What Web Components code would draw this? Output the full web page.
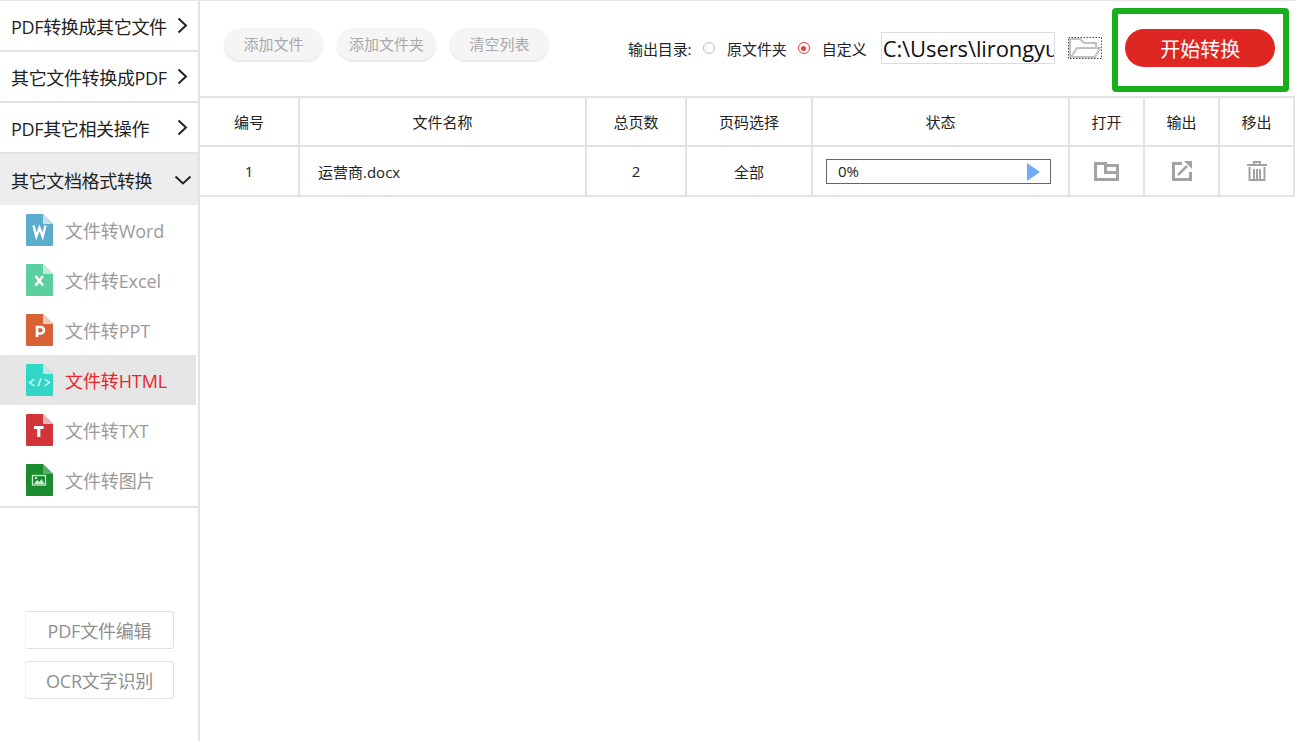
<!DOCTYPE html>
<html lang="zh"><head><meta charset="utf-8"><title>文件转HTML</title>
<style>
html,body{margin:0;padding:0;height:100%;background:#fff;overflow:hidden}
body{font-family:"Open Sans","Noto Sans CJK SC",sans-serif;color:#222}
</style></head><body>
<app-shell>
  <side-bar slot="side">
    <menu-row>PDF转换成其它文件</menu-row>
    <menu-row>其它文件转换成PDF</menu-row>
    <menu-row>PDF其它相关操作</menu-row>
    <menu-row open>其它文档格式转换</menu-row>
    <sub-list>
      <file-item color="#5baccd" fold="#c3dfeb" glyph="W">文件转Word</file-item>
      <file-item color="#5bcf9f" fold="#bdeeda" glyph="X">文件转Excel</file-item>
      <file-item color="#d86135" fold="#ecc9b8" glyph="P">文件转PPT</file-item>
      <file-item color="#31d6c6" fold="#bce9e4" glyph="code" active>文件转HTML</file-item>
      <file-item color="#d23439" fold="#e8b9b9" glyph="T">文件转TXT</file-item>
      <file-item color="#1a8c2e" fold="#58ad68" glyph="img">文件转图片</file-item>
    </sub-list>
    <side-btn slot="foot">PDF文件编辑</side-btn>
    <side-btn slot="foot">OCR文字识别</side-btn>
  </side-bar>
  <top-bar slot="top"></top-bar>
  <file-table slot="main"></file-table>
</app-shell>
<script>
const def=(name,css,html,init)=>customElements.define(name,class extends HTMLElement{
  constructor(){super();const r=this.attachShadow({mode:'open'});r.innerHTML=`<style>${css}</style>${typeof html==='function'?html(this):html}`;}
  connectedCallback(){init&&init(this)}
});
def('app-shell',`
:host{display:grid;grid-template-columns:200px 1fr;grid-template-rows:95px 1fr;width:1296px;height:741px;box-sizing:border-box;border-top:1px solid #e6e6e6}
.s{grid-row:1/3;display:flex;min-height:0}
.t{display:block;min-width:0}.m{display:block;min-width:0}
`,`<div class="s"><slot name="side"></slot></div><div class="t"><slot name="top"></slot></div><div class="m"><slot name="main"></slot></div>`);
def('side-bar',`
:host{display:flex;flex-direction:column;width:200px;box-sizing:border-box;border-right:2px solid #e3e3e3;height:740px;margin-right:0}
.foot{display:flex;flex-direction:column;gap:12px;padding:103px 0 0 25px}
`,`<slot></slot><div class="foot"><slot name="foot"></slot></div>`);
def('menu-row',`
:host{display:flex;align-items:center;justify-content:space-between;height:49px;border-bottom:2px solid #e3e3e3;padding:0 10px 0 11px;font-size:18px;color:#1f1f1f;white-space:nowrap;letter-spacing:-.35px}
:host([open]){background:#ededed;border-bottom:0;height:51px;padding-right:6px}
svg{flex:none;display:block}
`,el=>`<span><slot></slot></span>${el.hasAttribute('open')
?'<svg width="18" height="10" viewBox="0 0 18 10"><path d="M1.500 1.500L9 8.500L16.500 1.500" fill="none" stroke="#222" stroke-width="2"/></svg>'
:'<svg width="11" height="17" viewBox="0 0 11 17"><path d="M1.500 1.500L9 8.500L1.500 15.500" fill="none" stroke="#222" stroke-width="2"/></svg>'}`);
def('sub-list',`:host{display:block;border-bottom:2px solid #e3e3e3;height:301px}`,`<slot></slot>`);
def('file-item',`
:host{display:flex;align-items:center;height:50px;width:196px;padding-left:26px;box-sizing:border-box;font-size:18px;color:#9a9a9a;white-space:nowrap;letter-spacing:-.1px}
:host([active]){background:#e6e6e6;color:#e8262a}
svg{flex:none;display:block;margin-right:12px}
`,el=>{
 const c=el.getAttribute('color'),f=el.getAttribute('fold'),g=el.getAttribute('glyph');
 const path={
  W:'<path d="M7.500 11.500l2.800 11 3.200-8.500 3.200 8.500 2.800-11" fill="none" stroke="#fff" stroke-width="2.400"/>',
  X:'<path d="M9.500 12l7.500 9.500M17 12l-7.500 9.500" fill="none" stroke="#fff" stroke-width="2.400"/>',
  P:'<path d="M11 23V13h3.700a3 3 0 0 1 0 6.500h-3.700" fill="none" stroke="#fff" stroke-width="2.600"/>',
  T:'<path d="M8 13.500h9.500M12.750 13.500V23" fill="none" stroke="#fff" stroke-width="3.200"/>',
  code:'<path d="M8.500 15l-5 3.500 5 3.500M18.500 15l5 3.500-5 3.500M15 14.500l-3 8" fill="none" stroke="#d7f7f3" stroke-width="1.500"/>',
  img:'<rect x="6.500" y="11.500" width="13" height="9.500" fill="none" stroke="#cfe8d4" stroke-width="1.300"/><path d="M8 20l3-4 2.500 2 2-3 3 5z" fill="#cfe8d4"/><rect x="9" y="13" width="2" height="2" fill="#cfe8d4"/>'
 };
 return `<svg width="27" height="32" viewBox="0 0 27 32"><path d="M1 0H17L27 10V31a1 1 0 0 1-1 1H1a1 1 0 0 1-1-1V1a1 1 0 0 1 1-1z" fill="${c}"/><path d="M17 0L27 10H17z" fill="${f}"/>${path[g]}</svg><span><slot></slot></span>`;
});
def('side-btn',`
:host{display:flex;align-items:center;justify-content:center;width:149px;height:38px;box-sizing:border-box;border:1px solid #e0e0e0;border-left-color:#f0f0f0;border-radius:3px;font-size:18px;color:#8f8f8f;white-space:nowrap;letter-spacing:-.2px}
`,`<slot></slot>`);
def('pill-btn',`
:host{display:flex;align-items:center;justify-content:center;width:99px;height:32px;border-radius:16px;background:#f5f5f5;box-shadow:0 2px 2px #e8e8e8;font-size:15px;color:#a9a9a9;white-space:nowrap;box-sizing:border-box;padding-bottom:2px}
`,`<slot></slot>`);
def('radio-opt',`
:host{display:flex;align-items:center;gap:12px;font-size:15px;color:#222;white-space:nowrap;letter-spacing:-.05px}
i{display:block;width:12px;height:12px;border-radius:50%;box-sizing:border-box;border:1px solid #bdbdbd;background:#fff;position:relative;flex:none}
:host([on]) i{border-color:#e8403c}
:host([on]) i::after{content:"";position:absolute;left:2.500px;top:2.500px;width:5px;height:5px;border-radius:50%;background:#e8403c}
`,`<i></i><span><slot></slot></span>`);
def('top-bar',`
:host{display:flex;align-items:flex-start;height:95px;box-sizing:border-box;padding:7px 0 0 24px}
.btns{display:flex;gap:14px;width:404px;flex:none;margin-top:20px}
.out{display:flex;align-items:center;height:80px;flex:none}
.lab{font-size:15px;color:#222;white-space:nowrap;width:64px;margin-right:11px;letter-spacing:-.1px}
radio-opt+radio-opt{margin-left:11px}
.path{margin-left:14px;width:174px;height:32px;box-sizing:border-box;border:1px solid #dcdcdc;font-size:22px;color:#111;line-height:30px;overflow:hidden;white-space:nowrap;padding-left:1px;letter-spacing:-.1px}
.fold{margin-left:13px;display:block;flex:none}
.frame{margin-left:10px;width:177px;height:84px;box-sizing:border-box;border:6px solid #19ae1c;border-radius:4px;display:flex;align-items:center;justify-content:center;flex:none}
.go{width:150px;height:38px;margin-bottom:4px;border-radius:19px;background:#e02623;color:#fff;font-size:20px;display:flex;align-items:center;justify-content:center;flex:none;white-space:nowrap}
`,`<div class="btns"><pill-btn>添加文件</pill-btn><pill-btn>添加文件夹</pill-btn><pill-btn>清空列表</pill-btn></div>
<div class="out"><span class="lab">输出目录:</span><radio-opt>原文件夹</radio-opt><radio-opt on>自定义</radio-opt>
<div class="path">C:\\Users\\lirongyu</div>
<svg class="fold" width="34" height="22" viewBox="0 0 34 22"><rect x=".5" y=".5" width="33" height="21" fill="#fff" stroke="#444" stroke-dasharray="1.500 1.500"/><path d="M2 20V2h10l4 4h12v5" fill="none" stroke="#c2c2c2" stroke-width="2"/><path d="M3 20l6-9h23l-5 9z" fill="none" stroke="#c2c2c2" stroke-width="2"/></svg></div>
<div class="frame"><div class="go">开始转换</div></div>`);
def('file-table',`
:host{display:block;font-size:15px;color:#222}
.g{display:grid;grid-template-columns:100px 287px 100px 126px 257px 75px 75px 75px;grid-template-rows:49px 48px;width:1095px;border-top:2px solid #e3e3e3;border-bottom:2px solid #e3e3e3}
.g>div{display:flex;align-items:center;justify-content:center;border-right:2px solid #e3e3e3;box-sizing:border-box;white-space:nowrap;min-width:0}
.g>div:nth-child(-n+8){border-bottom:2px solid #e3e3e3}
.g>div.name{justify-content:flex-start;padding-left:18px}
.g>div.st{justify-content:flex-start;padding-left:13px}
.bar{position:relative;width:225px;height:25px;box-sizing:border-box;border:1px solid #666;display:flex;align-items:center;padding-left:11px}
.bar svg{position:absolute;right:10px;top:3px}
svg{display:block}
`,`<div class="g">
<div>编号</div><div>文件名称</div><div>总页数</div><div>页码选择</div><div>状态</div><div>打开</div><div>输出</div><div>移出</div>
<div>1</div><div class="name">运营商.docx</div><div>2</div><div>全部</div>
<div class="st"><div class="bar">0%<svg width="13" height="18" viewBox="0 0 13 18"><path d="M0 0L13 9L0 18z" fill="#6eacf5"/></svg></div></div>
<div><svg width="25" height="19" viewBox="0 0 25 19"><path d="M1.500 1.500H11.500V10.500H23.500V17.500H1.500zM11.500 3.500H23.500V10.500" fill="none" stroke="#a3a3a3" stroke-width="3"/></svg></div>
<div><svg width="20" height="20" viewBox="0 0 20 20"><path d="M10 2.500H1.500V18.500H18.500V11" fill="none" stroke="#a3a3a3" stroke-width="3"/><path d="M6 14L15 5" stroke="#a3a3a3" stroke-width="2.500"/><path d="M12 0H20V8z" fill="#a3a3a3"/></svg></div>
<div><svg width="20" height="20" viewBox="0 0 20 20"><path d="M0 4H20M7 3V1H13V3" fill="none" stroke="#a3a3a3" stroke-width="2"/><path d="M2.500 6V19H17.500V6" fill="#fff" stroke="#a3a3a3" stroke-width="2"/><path d="M7 8V18M10 8V18M13 8V18" stroke="#a3a3a3" stroke-width="2"/></svg></div>
</div>`);
</script>
</body></html>
